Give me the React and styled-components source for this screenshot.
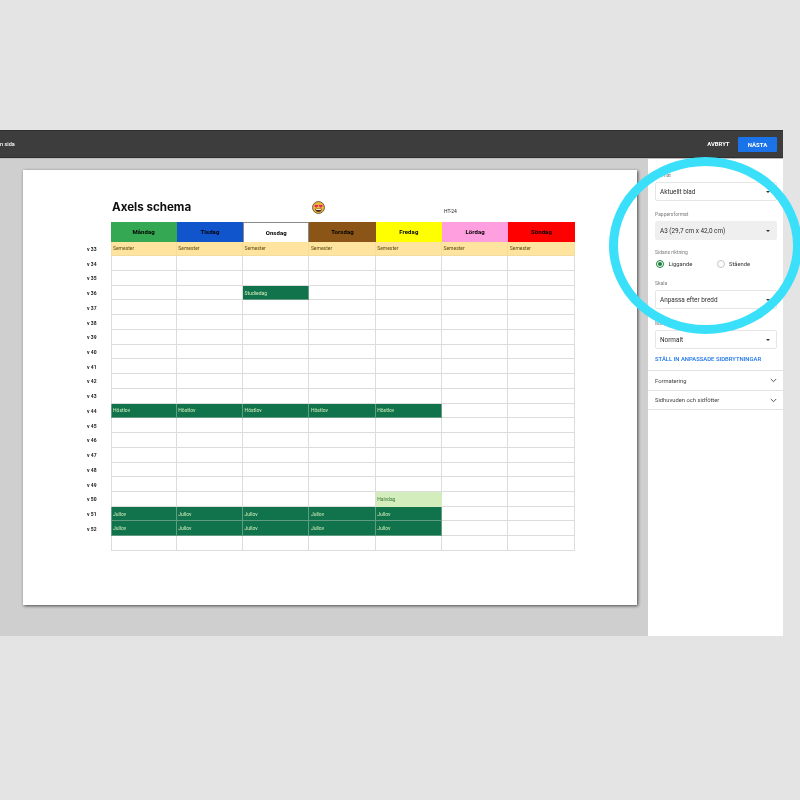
import React from "react";
import styled, { createGlobalStyle } from "styled-components";

const Global = createGlobalStyle`
  html, body { margin: 0; padding: 0; background: #e4e4e4; }
  * { box-sizing: border-box; }
`;

const Page = styled.div`
  position: relative;
  width: 800px;
  height: 800px;
  padding-top: 130px;
  overflow: hidden;
  background: #e4e4e4;
  font-family: Roboto, "Liberation Sans", sans-serif;
`;
const Frame = styled.div`
  width: 783px;
  height: 506px;
  display: flex;
  flex-direction: column;
  filter: blur(0.6px);
`;
const Toolbar = styled.header`
  height: 28px;
  flex: none;
  display: flex;
  align-items: center;
  justify-content: space-between;
  background: #3d3d3d;
  border-top: 1px solid #2f2f2f;
  border-bottom: 1px solid #2f2f2f;
  color: #fff;
`;
const Crumb = styled.span`
  font-size: 5.5px;
  font-weight: 500;
`;
const Actions = styled.div`
  display: flex;
  align-items: center;
  gap: 8.5px;
  padding-right: 6px;
`;
const Cancel = styled.span`
  font-size: 5.9px;
  font-weight: 700;
`;
const Next = styled.span`
  width: 39px;
  height: 15px;
  display: flex;
  align-items: center;
  justify-content: center;
  background: #1a73e8;
  font-size: 6px;
  font-weight: 700;
  border-radius: 1px;
`;
const Body = styled.div`
  flex: 1;
  display: flex;
  min-height: 0;
  border-top: 1px solid #bdbdbd;
`;
const Preview = styled.main`
  flex: 1;
  padding: 11px 0 0 23px;
  background: #cfcfcf;
`;
const Paper = styled.section`
  width: 614px;
  height: 435px;
  padding-top: 29px;
  background: #fff;
  box-shadow: 1px 1px 3px rgba(0, 0, 0, 0.65);
`;
const TitleRow = styled.div`
  height: 23px;
  display: flex;
  align-items: center;
  padding: 0 0 7px 89px;
`;
const Title = styled.h1`
  width: 200px;
  margin: 0;
  font-family: Inter, "Liberation Sans", sans-serif;
  font-size: 11.6px;
  font-weight: 700;
  color: #0d0d0d;
`;
const Emoji = styled.svg`
  width: 13px;
  height: 13px;
  flex: none;
`;
const Term = styled.span`
  margin: 7px 0 0 119px;
  font-size: 5px;
  color: #222;
`;
const Schedule = styled.div`
  display: grid;
  grid-template-columns: 87.5px repeat(7, 66.3px);
  grid-template-rows: 19.5px repeat(21, 14.74px);
`;
const Corner = styled.div``;
const DayHead = styled.div`
  display: flex;
  align-items: center;
  justify-content: center;
  background: ${(p) => p.$bg};
  color: #000;
  font-size: 6px;
  font-weight: 700;
  letter-spacing: 0.1px;
  border: ${(p) => (p.$outlined ? "1px solid #8a8a8a" : "none")};
  border-bottom: none;
`;
const Week = styled.div`
  display: flex;
  align-items: center;
  justify-content: flex-end;
  padding-right: 14px;
  font-size: 5px;
  font-weight: 700;
  color: #222;
`;
const Cell = styled.div`
  display: flex;
  align-items: center;
  padding-left: 1.5px;
  font-size: 5px;
  background: ${(p) => p.$bg || "#fff"};
  color: ${(p) => p.$fg || "#333"};
  border-right: 1px solid ${(p) => p.$line || "#dcdcdc"};
  border-bottom: 1px solid ${(p) => p.$line || "#dcdcdc"};
  border-left: ${(p) => (p.$first ? `1px solid ${p.$line || "#dcdcdc"}` : "none")};
`;
const Sidebar = styled.aside`
  width: 135px;
  flex: none;
  display: flex;
  flex-direction: column;
  padding-top: 9px;
  background: #fff;
`;
const Fields = styled.div`
  display: flex;
  flex-direction: column;
  padding: 0 6px 5px 7px;
`;
const FieldLabel = styled.label`
  height: 14px;
  margin-top: ${(p) => p.$top || 0}px;
  font-size: 5px;
  line-height: 14px;
  color: #7d7d7d;
`;
const Select = styled.div`
  height: 19px;
  display: flex;
  align-items: center;
  justify-content: space-between;
  padding: 0 6px 0 4px;
  border-radius: 2px;
  background: ${(p) => (p.$filled ? "#efefef" : "#fff")};
  border: 1px solid ${(p) => (p.$filled ? "#efefef" : "#e6e6e6")};
  font-size: 6.4px;
  color: #2e2e2e;
`;
const Caret = styled.i`
  width: 0;
  height: 0;
  border-left: 2px solid transparent;
  border-right: 2px solid transparent;
  border-top: 2px solid #333;
`;
const Radios = styled.div`
  display: flex;
  align-items: center;
  height: 10px;
  padding-left: 1px;
`;
const RadioItem = styled.div`
  width: 61px;
  display: flex;
  align-items: center;
  gap: 4.5px;
  font-size: 5.8px;
  color: #333;
`;
const Radio = styled.span`
  width: 8px;
  height: 8px;
  display: flex;
  align-items: center;
  justify-content: center;
  border-radius: 50%;
  border: 1px solid ${(p) => (p.$on ? "#188038" : "#c4c4c4")};
  &::after {
    content: "";
    width: 4px;
    height: 4px;
    border-radius: 50%;
    background: ${(p) => (p.$on ? "#188038" : "transparent")};
  }
`;
const LinkText = styled.div`
  height: 12px;
  margin-top: 4px;
  font-size: 5.9px;
  font-weight: 500;
  line-height: 12px;
  white-space: nowrap;
  color: #1a73e8;
`;
const Accordion = styled.div`
  height: 20px;
  flex: none;
  display: flex;
  align-items: center;
  justify-content: space-between;
  padding: 0 6px 0 7px;
  border-top: 1px solid #e2e2e2;
  font-size: 5.8px;
  color: #444;
  &:last-child {
    border-bottom: 1px solid #e2e2e2;
  }
`;
const Chevron = styled.svg`
  width: 7px;
  height: 5px;
`;
const Ring = styled.div`
  position: absolute;
  left: 609px;
  top: 157px;
  width: 193px;
  height: 177px;
  border: 9px solid #3ae0fa;
  border-radius: 50%;
  pointer-events: none;
`;

const days = [
  ["Måndag", "#34a853"],
  ["Tisdag", "#1155cc"],
  ["Onsdag", "#fff", true],
  ["Torsdag", "#8b5518"],
  ["Fredag", "#ffff00"],
  ["Lördag", "#ff9fdf"],
  ["Söndag", "#ff0000"],
];
const weeks = Array.from({ length: 21 }, (_, i) => (i < 20 ? `v ${33 + i}` : ""));
const GREEN = ["#11734b", "#d4edbc", "#5f9c82"];
const entry = (row, col) => {
  const w = 33 + row;
  if (w === 33) return ["Semester", "#ffe49f", "#5f4a12", "#f2dca0"];
  if (w === 36 && col === 2) return ["Studiedag", ...GREEN];
  if (w === 44 && col < 5) return ["Höstlov", ...GREEN];
  if ((w === 51 || w === 52) && col < 5) return ["Jullov", ...GREEN];
  if (w === 50 && col === 4) return ["Halvdag", "#d4edbc", "#3f7a3a", "#d4edbc"];
  return ["", undefined, undefined, undefined];
};

const EmojiIcon = () => (
  <Emoji viewBox="0 0 24 24">
    <circle cx="12" cy="12" r="11" fill="#eeb53c" stroke="#5a5040" strokeWidth="1.6" />
    <path d="M4.500 8.500c.8-2 3-1.800 3.500-.6.6-1.200 2.800-1.400 3.300.5.3 1.800-2.500 3.500-3.500 4-1-.5-4-2-3.300-3.900z" fill="#e0245e" />
    <path d="M19.500 8.500c-.8-2-3-1.800-3.500-.6-.6-1.200-2.800-1.400-3.300.5-.3 1.800 2.500 3.500 3.500 4 1-.5 4-2 3.300-3.900z" fill="#e0245e" />
    <path d="M6 14.500h12c0 4-2.700 6-6 6s-6-2-6-6z" fill="#4a3418" />
    <path d="M7.500 15h9v1.600h-9z" fill="#fff" />
  </Emoji>
);

const ChevronIcon = () => (
  <Chevron viewBox="0 0 7 5">
    <path d="M.8 1l2.700 2.700L6.200 1" fill="none" stroke="#555" strokeWidth="1" />
  </Chevron>
);

export default function App() {
  return (
    <Page>
      <Global />
      <Frame>
        <Toolbar>
          <Crumb>n sida</Crumb>
          <Actions>
            <Cancel>AVBRYT</Cancel>
            <Next>NÄSTA</Next>
          </Actions>
        </Toolbar>
        <Body>
          <Preview>
            <Paper>
              <TitleRow>
                <Title>Axels schema</Title>
                <EmojiIcon />
                <Term>HT-24</Term>
              </TitleRow>
              <Schedule>
                <Corner />
                {days.map(([name, bg, outlined]) => (
                  <DayHead key={name} $bg={bg} $outlined={outlined}>
                    {name}
                  </DayHead>
                ))}
                {weeks.map((label, row) => (
                  <React.Fragment key={row}>
                    <Week>{label}</Week>
                    {days.map(([name], col) => {
                      const [text, bg, fg, line] = entry(row, col);
                      return (
                        <Cell key={name} $bg={bg} $fg={fg} $line={line} $first={col === 0}>
                          {text}
                        </Cell>
                      );
                    })}
                  </React.Fragment>
                ))}
              </Schedule>
            </Paper>
          </Preview>
          <Sidebar>
            <Fields>
              <FieldLabel>Format</FieldLabel>
              <Select>
                Aktuellt blad
                <Caret />
              </Select>
              <FieldLabel $top={6}>Pappersformat</FieldLabel>
              <Select $filled>
                A3 (29,7 cm x 42,0 cm)
                <Caret />
              </Select>
              <FieldLabel $top={5}>Sidans riktning</FieldLabel>
              <Radios>
                <RadioItem>
                  <Radio $on />
                  Liggande
                </RadioItem>
                <RadioItem>
                  <Radio />
                  Stående
                </RadioItem>
              </Radios>
              <FieldLabel $top={7}>Skala</FieldLabel>
              <Select>
                Anpassa efter bredd
                <Caret />
              </Select>
              <FieldLabel $top={7}>Marginaler</FieldLabel>
              <Select>
                Normalt
                <Caret />
              </Select>
              <LinkText>STÄLL IN ANPASSADE SIDBRYTNINGAR</LinkText>
            </Fields>
            <Accordion>
              Formatering
              <ChevronIcon />
            </Accordion>
            <Accordion>
              Sidhuvuden och sidfötter
              <ChevronIcon />
            </Accordion>
          </Sidebar>
        </Body>
      </Frame>
      <Ring />
    </Page>
  );
}
